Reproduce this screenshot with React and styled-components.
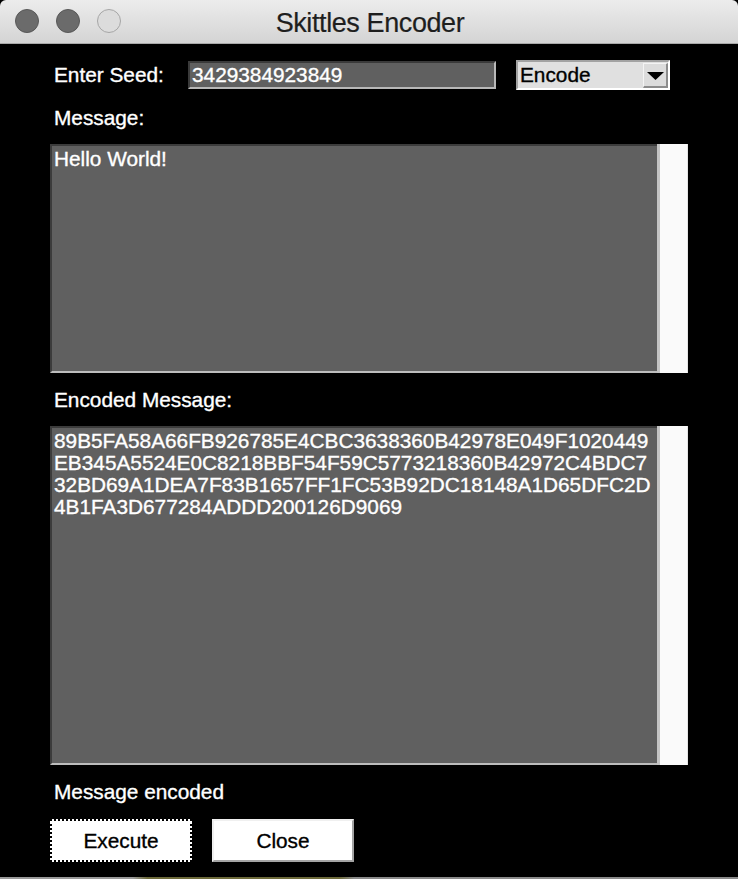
import React from 'react';
import styled, { createGlobalStyle } from 'styled-components';

const GlobalStyle = createGlobalStyle`
  html, body {
    margin: 0;
    padding: 0;
    background: #000;
  }
  * {
    box-sizing: border-box;
  }
`;

const encoded = [
  '89B5FA58A66FB926785E4CBC3638360B42978E049F1020449',
  'EB345A5524E0C8218BBF54F59C5773218360B42972C4BDC7',
  '32BD69A1DEA7F83B1657FF1FC53B92DC18148A1D65DFC2D',
  '4B1FA3D677284ADDD200126D9069',
];

function App() {
  return (
    <>
      <GlobalStyle />
      <Window>
        <TitleBar>
          <Lights>
            <Light />
            <Light />
            <Light $off />
          </Lights>
          <Title>Skittles Encoder</Title>
        </TitleBar>
        <Content>
          <SeedRow>
            <Label $width="138px">Enter Seed:</Label>
            <Entry>3429384923849</Entry>
            <Dropdown>
              <span>Encode</span>
              <ArrowButton>
                <svg width="17" height="8" viewBox="0 0 17 8">
                  <polygon points="0,0 17,0 8.5,8" fill="#000" />
                </svg>
              </ArrowButton>
            </Dropdown>
          </SeedRow>
          <Label>Message:</Label>
          <TextBox $height="229px">
            <TextArea>Hello World!</TextArea>
            <ScrollTrack />
          </TextBox>
          <Label>Encoded Message:</Label>
          <TextBox $height="339px">
            <TextArea>{encoded.join('\n')}</TextArea>
            <ScrollTrack />
          </TextBox>
          <Label>Message encoded</Label>
          <ButtonRow>
            <Button $focused>Execute</Button>
            <Button>Close</Button>
          </ButtonRow>
        </Content>
      </Window>
      <Desktop />
    </>
  );
}

export default App;

const Window = styled.div`
  width: 738px;
  height: 877px;
  background: #000;
  display: flex;
  flex-direction: column;
  font-family: 'Liberation Sans', Arial, sans-serif;
`;

const TitleBar = styled.div`
  height: 44px;
  flex-shrink: 0;
  background: linear-gradient(#ececec, #d4d4d4);
  border-bottom: 1px solid #a9a9a9;
  border-radius: 6px 6px 0 0;
  position: relative;
  display: flex;
  align-items: center;
  justify-content: center;
`;

const Lights = styled.div`
  position: absolute;
  left: 15px;
  top: 9px;
  display: flex;
  gap: 17px;
`;

const Light = styled.div`
  width: 24px;
  height: 24px;
  border-radius: 50%;
  background: ${(p) => (p.$off ? '#dcdcdc' : '#6b6b6b')};
  border: 1px solid ${(p) => (p.$off ? '#a6a6a6' : '#585858')};
`;

const Title = styled.div`
  font-size: 27px;
  color: #1e1e1e;
  letter-spacing: -0.4px;
  margin-left: 2px;
  margin-top: 3px;
  -webkit-text-stroke: 0.2px #1e1e1e;
`;

const Content = styled.div`
  flex: 1;
  padding: 16px 50px 0 50px;
  display: flex;
  flex-direction: column;
  -webkit-text-stroke: 0.35px currentColor;
`;

const SeedRow = styled.div`
  display: flex;
  align-items: center;
  height: 30px;
  margin-bottom: 17px;
`;

const Label = styled.div`
  color: #fff;
  font-size: 20.8px;
  line-height: 22px;
  height: 22px;
  padding-left: 4px;
  flex-shrink: 0;
  width: ${(p) => p.$width || 'auto'};
  margin-bottom: ${(p) => (p.$width ? '0' : '15px')};
`;

const Entry = styled.div`
  width: 308px;
  height: 28px;
  background: #606060;
  color: #fff;
  font-size: 20.8px;
  line-height: 24px;
  padding-left: 2px;
  border-top: 2px solid #3a3a3a;
  border-left: 2px solid #3a3a3a;
  border-bottom: 2px solid #b8b8b8;
  border-right: 2px solid #b8b8b8;
`;

const Dropdown = styled.div`
  margin-left: 20px;
  width: 154px;
  height: 30px;
  background: #e0e0e0;
  border-top: 2px solid #a2a2a2;
  border-left: 2px solid #a2a2a2;
  border-bottom: 2px solid #fff;
  border-right: 2px solid #fff;
  display: flex;
  align-items: center;
  justify-content: space-between;
  color: #000;
  font-size: 20.8px;
  padding-left: 2px;

  span {
    line-height: 24px;
  }
`;

const ArrowButton = styled.div`
  width: 25px;
  height: 25px;
  margin-top: 1px;
  background: #dcdcdc;
  border-top: 1px solid #f4f4f4;
  border-left: 1px solid #f4f4f4;
  border-right: 2px solid #8c8c8c;
  border-bottom: 2px solid #8c8c8c;
  display: flex;
  align-items: center;
  justify-content: center;

  svg {
    margin-top: 2px;
  }
`;

const TextBox = styled.div`
  height: ${(p) => p.$height};
  display: flex;
  margin-bottom: 16px;
  flex-shrink: 0;
`;

const TextArea = styled.div`
  flex: 1;
  background: #606060;
  color: #fff;
  font-size: 20.8px;
  line-height: 22px;
  white-space: pre;
  padding: 2px 2px;
  border-top: 2px solid #3c3c3c;
  border-left: 2px solid #3c3c3c;
  border-bottom: 2px solid #bdbdbd;
`;

const ScrollTrack = styled.div`
  width: 31px;
  background: #fafafa;
  border-left: 3px solid #c4c4c4;
  border-right: 1px solid #e4e4e4;
`;

const ButtonRow = styled.div`
  display: flex;
  gap: 20px;
  margin-top: 1px;
`;

const Button = styled.div`
  width: 142px;
  height: 43px;
  background: #fff;
  color: #000;
  font-size: 20.8px;
  display: flex;
  align-items: center;
  justify-content: center;
  ${(p) =>
    p.$focused
      ? `border: 2px dotted #000;`
      : `border-top: 2px solid #f0f0f0;
         border-left: 2px solid #f0f0f0;
         border-right: 2px solid #a4a4a4;
         border-bottom: 2px solid #a4a4a4;`}
`;

const Desktop = styled.div`
  height: 2px;
  background: linear-gradient(
    90deg,
    #9a9a9a 0%,
    #9a9a9a 18%,
    #6d6a3a 20%,
    #6d6a3a 46%,
    #8a8a8a 48%,
    #8a8a8a 100%
  );
`;
